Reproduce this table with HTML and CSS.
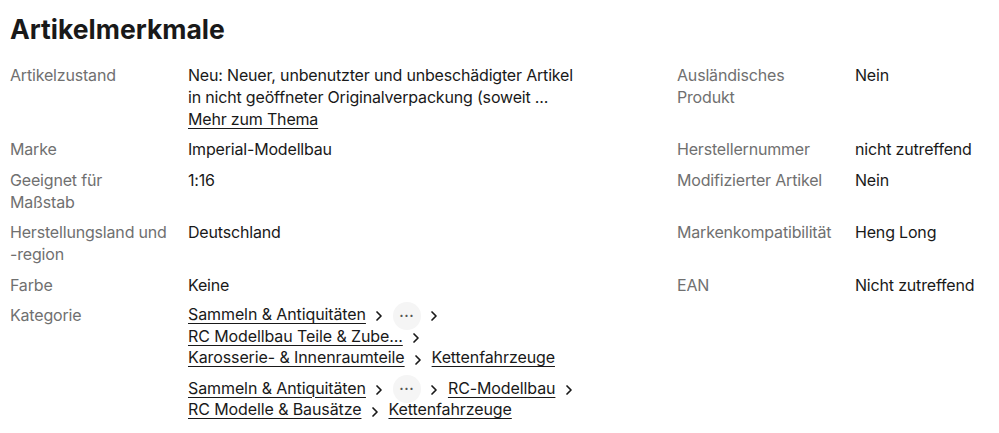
FILE: index.html
```html
<!DOCTYPE html>
<html lang="de">
<head>
<meta charset="utf-8">
<title>Artikelmerkmale</title>
<link rel="stylesheet" href="styles.css">
</head>
<body>
<section class="specs">
  <h2 class="title">Artikelmerkmale</h2>
  <div class="table">
    <div class="row">
      <div class="label">Artikelzustand</div>
      <div class="value value-main">
        <span class="clamp">Neu: Neuer, unbenutzter und unbeschädigter Artikel in nicht geöffneter Originalverpackung (soweit ...</span>
        <a class="link" href="#">Mehr zum Thema</a>
      </div>
      <div class="label">Ausländisches Produkt</div>
      <div class="value">Nein</div>
    </div>
    <div class="row">
      <div class="label">Marke</div>
      <div class="value value-main">Imperial-Modellbau</div>
      <div class="label">Herstellernummer</div>
      <div class="value">nicht zutreffend</div>
    </div>
    <div class="row">
      <div class="label">Geeignet für Maßstab</div>
      <div class="value value-main">1:16</div>
      <div class="label">Modifizierter Artikel</div>
      <div class="value">Nein</div>
    </div>
    <div class="row">
      <div class="label">Herstellungsland und -region</div>
      <div class="value value-main">Deutschland</div>
      <div class="label">Markenkompatibilität</div>
      <div class="value">Heng Long</div>
    </div>
    <div class="row">
      <div class="label">Farbe</div>
      <div class="value value-main">Keine</div>
      <div class="label">EAN</div>
      <div class="value">Nicht zutreffend</div>
    </div>
    <div class="row">
      <div class="label">Kategorie</div>
      <div class="value value-main crumbs">
        <div class="crumb">
          <a class="link" href="#">Sammeln &amp; Antiquitäten</a><span class="chev"><svg width="8" height="12" viewBox="0 0 8 12"><path d="M2 2 L6 6 L2 10" fill="none" stroke="#191919" stroke-width="1.7" stroke-linecap="round" stroke-linejoin="round"/></svg></span><span class="more">•••</span><span class="chev"><svg width="8" height="12" viewBox="0 0 8 12"><path d="M2 2 L6 6 L2 10" fill="none" stroke="#191919" stroke-width="1.7" stroke-linecap="round" stroke-linejoin="round"/></svg></span><br><a class="link" href="#">RC Modellbau Teile &amp; Zube...</a><span class="chev"><svg width="8" height="12" viewBox="0 0 8 12"><path d="M2 2 L6 6 L2 10" fill="none" stroke="#191919" stroke-width="1.7" stroke-linecap="round" stroke-linejoin="round"/></svg></span><br><a class="link" href="#">Karosserie- &amp; Innenraumteile</a><span class="chev"><svg width="8" height="12" viewBox="0 0 8 12"><path d="M2 2 L6 6 L2 10" fill="none" stroke="#191919" stroke-width="1.7" stroke-linecap="round" stroke-linejoin="round"/></svg></span><a class="link" href="#">Kettenfahrzeuge</a>
        </div>
        <div class="crumb">
          <a class="link" href="#">Sammeln &amp; Antiquitäten</a><span class="chev"><svg width="8" height="12" viewBox="0 0 8 12"><path d="M2 2 L6 6 L2 10" fill="none" stroke="#191919" stroke-width="1.7" stroke-linecap="round" stroke-linejoin="round"/></svg></span><span class="more">•••</span><span class="chev"><svg width="8" height="12" viewBox="0 0 8 12"><path d="M2 2 L6 6 L2 10" fill="none" stroke="#191919" stroke-width="1.7" stroke-linecap="round" stroke-linejoin="round"/></svg></span><a class="link" href="#">RC-Modellbau</a><span class="chev"><svg width="8" height="12" viewBox="0 0 8 12"><path d="M2 2 L6 6 L2 10" fill="none" stroke="#191919" stroke-width="1.7" stroke-linecap="round" stroke-linejoin="round"/></svg></span><br><a class="link" href="#">RC Modelle &amp; Bausätze</a><span class="chev"><svg width="8" height="12" viewBox="0 0 8 12"><path d="M2 2 L6 6 L2 10" fill="none" stroke="#191919" stroke-width="1.7" stroke-linecap="round" stroke-linejoin="round"/></svg></span><a class="link" href="#">Kettenfahrzeuge</a>
        </div>
      </div>
      <div class="label"></div>
      <div class="value"></div>
    </div>
  </div>
</section>
</body>
</html>
```
FILE: styles.css
```css
* { box-sizing: border-box; }
html, body { margin: 0; background: #fff; }
body {
  font-family: Inter, "Open Sans", Arial, sans-serif;
  color: #191919;
  font-size: 16px;
  line-height: 22px;
  letter-spacing: -0.18px;
}
.specs { padding: 11px 10px 0 10px; }
.title {
  margin: 0 0 17px 0;
  font-size: 26.5px;
  line-height: 36px;
  font-weight: 700;
  letter-spacing: 0;
}
.table { display: flex; flex-direction: column; gap: 8.4px; }
.row {
  display: grid;
  grid-template-columns: 178px 489px 178px 1fr;
}
.label { color: #707070; padding-right: 18px; }
.value-main { padding-right: 94px; }
.clamp { display: block; }
.link { color: #191919; text-decoration: underline; text-underline-offset: 3px; text-decoration-thickness: 1px; }
.crumbs { display: flex; flex-direction: column; gap: 9px; letter-spacing: -0.1px; }
.crumb { line-height: 21.5px; }
.chev { display: inline-block; width: 27px; text-align: center; vertical-align: middle; line-height: 12px; }
.chev svg { display: inline-block; vertical-align: middle; }
.more {
  display: inline-flex;
  align-items: center;
  justify-content: center;
  width: 28px;
  height: 28px;
  margin: -4px 0 -4px 0;
  border-radius: 50%;
  background: #f5f5f5;
  color: #555;
  font-size: 7px;
  letter-spacing: 1px;
  vertical-align: middle;
}
```
